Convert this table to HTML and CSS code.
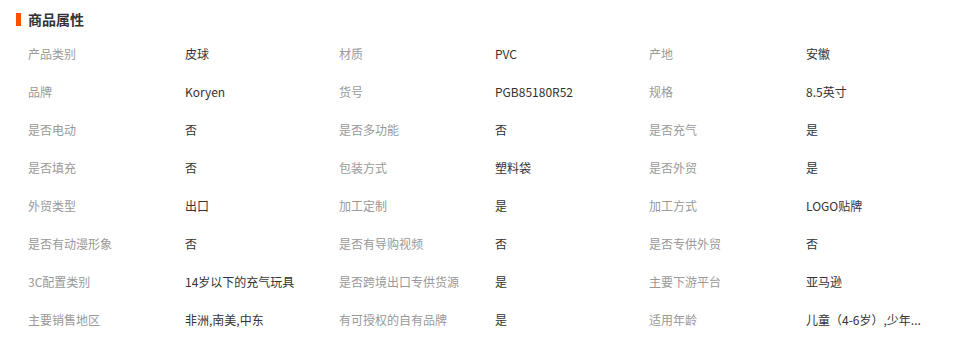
FILE: index.html
```html
<!DOCTYPE html>
<html lang="zh">
<head>
<meta charset="utf-8">
<link rel="stylesheet" href="styles.css">
</head>
<body>
<div class="attrs">
  <h2 class="title"><span class="bar"></span>商品属性</h2>
  <div class="grid">
    <div class="k">产品类别</div><div class="v">皮球</div>
    <div class="k">材质</div><div class="v">PVC</div>
    <div class="k">产地</div><div class="v">安徽</div>

    <div class="k">品牌</div><div class="v">Koryen</div>
    <div class="k">货号</div><div class="v">PGB85180R52</div>
    <div class="k">规格</div><div class="v">8.5英寸</div>

    <div class="k">是否电动</div><div class="v">否</div>
    <div class="k">是否多功能</div><div class="v">否</div>
    <div class="k">是否充气</div><div class="v">是</div>

    <div class="k">是否填充</div><div class="v">否</div>
    <div class="k">包装方式</div><div class="v">塑料袋</div>
    <div class="k">是否外贸</div><div class="v">是</div>

    <div class="k">外贸类型</div><div class="v">出口</div>
    <div class="k">加工定制</div><div class="v">是</div>
    <div class="k">加工方式</div><div class="v">LOGO贴牌</div>

    <div class="k">是否有动漫形象</div><div class="v">否</div>
    <div class="k">是否有导购视频</div><div class="v">否</div>
    <div class="k">是否专供外贸</div><div class="v">否</div>

    <div class="k">3C配置类别</div><div class="v">14岁以下的充气玩具</div>
    <div class="k">是否跨境出口专供货源</div><div class="v">是</div>
    <div class="k">主要下游平台</div><div class="v">亚马逊</div>

    <div class="k">主要销售地区</div><div class="v">非洲,南美,中东</div>
    <div class="k">有可授权的自有品牌</div><div class="v">是</div>
    <div class="k">适用年龄</div><div class="v">儿童（4-6岁）,少年...</div>
  </div>
</div>
</body>
</html>
```
FILE: styles.css
```css
html, body {
  margin: 0;
  padding: 0;
  background: #fff;
}
body {
  font-family: "Microsoft YaHei", "Noto Sans CJK SC", "Liberation Sans", sans-serif;
  font-size: 12px;
  color: #333;
  width: 971px;
  height: 351px;
  overflow: hidden;
}
.attrs {
  padding: 9px 0 0 16px;
}
.title {
  margin: 0;
  display: flex;
  align-items: center;
  gap: 7px;
  height: 20px;
  font-size: 14px;
  font-weight: bold;
  color: #333;
  line-height: 20px;
}
.bar {
  width: 5px;
  height: 13px;
  background: #ff5000;
}
.grid {
  display: grid;
  grid-template-columns: 157px 154px 156px 154px 157px 150px;
  grid-auto-rows: 38px;
  padding: 6px 0 0 12px;
}
.k, .v {
  line-height: 38px;
  white-space: nowrap;
  overflow: hidden;
}
.k {
  color: #999;
}
.v {
  color: #333;
}
```
